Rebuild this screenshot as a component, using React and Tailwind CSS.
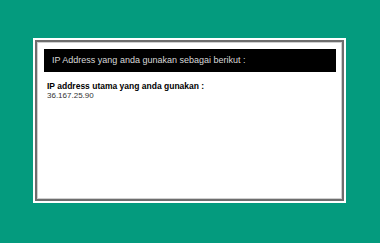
import React from 'react';

const App = () => {
  return (
    <div
      className="w-[380px] h-[243px] bg-[#049b7e] pt-[38px] pl-[33px]"
      style={{ fontFamily: '"Liberation Sans", Arial, sans-serif' }}
    >
      {/* outer white frame */}
      <div className="w-[313px] h-[165px] bg-white p-[2px]">
        <div className="h-full border-[2px] border-[#6e6e6e]">
          <div className="h-full border border-[#cfcfcf] bg-white pt-[6px] pl-[6px] pr-[5px]">
            <div className="h-[23px] bg-black flex items-center pl-[8px] text-[9px] text-[#d8d8d8]">
              IP Address yang anda gunakan sebagai berikut :
            </div>
            <div className="pt-[9px] pl-[3px]">
              <p className="text-[8.5px] font-bold text-black leading-[10px]">
                IP address utama yang anda gunakan :
              </p>
              <p className="text-[8px] text-[#333] leading-[10px]">36.167.25.90</p>
            </div>
          </div>
        </div>
      </div>
    </div>
  );
};

export default App;
